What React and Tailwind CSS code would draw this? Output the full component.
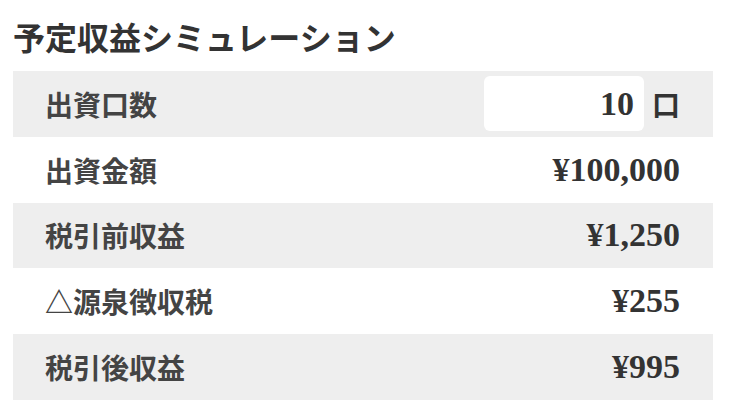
import { useState } from "react";

function Row({ label, shaded, children }) {
  return (
    <div
      className={`flex h-[65.8px] items-center justify-between pl-[32px] pr-[33px] ${
        shaded ? "bg-[#eeeeee]" : "bg-white"
      }`}
    >
      <span className="font-['Noto_Sans_CJK_JP',sans-serif] text-[28px] font-bold leading-none text-[#444]">
        {label}
      </span>
      {children}
    </div>
  );
}

function Amount({ children }) {
  return (
    <span className="font-['Liberation_Serif','Noto_Sans_CJK_JP',serif] text-[34px] font-bold leading-none text-[#333]">
      {children}
    </span>
  );
}

export default function App() {
  const [units, setUnits] = useState("10");

  return (
    <div className="min-h-screen bg-white">
      <div className="ml-[13px] w-[700px] pt-[20px]">
        {/* TITLE */}
        <h2 className="h-[51px] font-['Noto_Sans_CJK_JP',sans-serif] text-[32px] font-bold leading-[32px] text-[#333]">
          予定収益シミュレーション
        </h2>

        {/* TABLE */}
        <Row label="出資口数" shaded>
          <div className="flex items-center gap-[8px]">
            <input
              value={units}
              onChange={(e) => setUnits(e.target.value)}
              className="h-[55px] w-[160px] rounded-md bg-white pr-[10px] text-right font-['Liberation_Serif',serif] text-[34px] font-bold text-[#333] outline-none"
            />
            <span className="font-['Noto_Sans_CJK_JP',sans-serif] text-[28px] font-bold leading-none text-[#333]">
              口
            </span>
          </div>
        </Row>
        <Row label="出資金額">
          <Amount>¥100,000</Amount>
        </Row>
        <Row label="税引前収益" shaded>
          <Amount>¥1,250</Amount>
        </Row>
        <Row label="△源泉徴収税">
          <Amount>¥255</Amount>
        </Row>
        <Row label="税引後収益" shaded>
          <Amount>¥995</Amount>
        </Row>
      </div>
    </div>
  );
}
